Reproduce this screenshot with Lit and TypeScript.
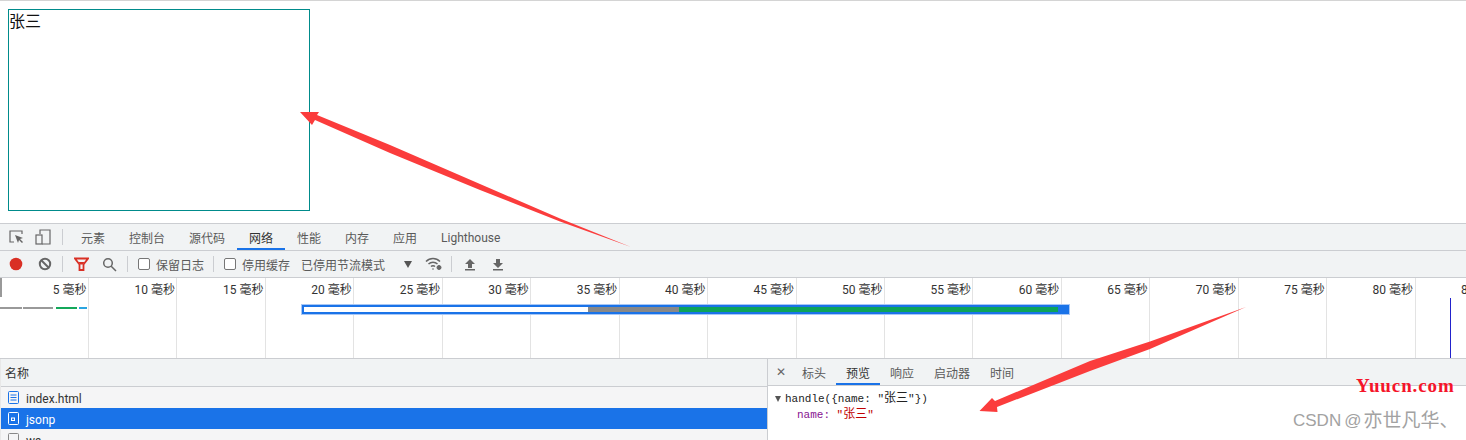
import { LitElement, html, css } from "lit";
import { customElement } from "lit/decorators.js";

const TABS = ["元素", "控制台", "源代码", "网络", "性能", "内存", "应用", "Lighthouse"];
const DETAIL = ["标头", "预览", "响应", "启动器", "时间"];
const TICKS = Array.from({ length: 17 }, (_, i) => (i + 1) * 5);

@customElement("app-root")
export class AppRoot extends LitElement {
  static styles = css`
    :host { display: block; width: 1466px; height: 440px; overflow: hidden; position: relative; background: #fff;
      font-family: Roboto, "Noto Sans CJK SC", sans-serif; font-size: 12px; color: #333; }
    .page { border-top: 1px solid #d4d4d4; padding: 8px 8px 0; box-sizing: border-box; height: 223px; }
    .box { width: 302px; height: 202px; box-sizing: border-box; border: 1px solid #008b8b; font-size: 16px; line-height: 20px; color: #111; font-family: "Noto Sans CJK SC", sans-serif; }
    .devtools { height: 217px; display: flex; flex-direction: column; }
    .bar { background: #f1f3f4; display: flex; align-items: center; box-sizing: border-box; flex: none; }
    .main { height: 28px; border-top: 1px solid #cbcdd1; border-bottom: 1px solid #cbcdd1; padding-left: 9px; }
    .tools { height: 27px; border-bottom: 1px solid #cbcdd1; padding-left: 9px; color: #555; }
    .tab { height: 26px; display: flex; align-items: center; padding: 2px 12px 0; color: #5a5a5a; box-sizing: border-box; border-bottom: 2px solid transparent; }
    .tab.on { color: #333; border-bottom-color: #1a73e8; }
    .tab.lat { padding-top: 4px; }
    .tabs { display: flex; margin-left: 6px; }
    .sep { width: 1px; height: 16px; background: #cbcdd1; flex: none; }
    .ic { display: block; flex: none; }
    .check { display: flex; align-items: center; gap: 6px; color: #5a5a5a; }
    .box-ic { width: 12px; height: 12px; border: 1px solid #767676; border-radius: 2px; box-sizing: border-box; background: #fff; }
    .over { position: relative; flex: none; display: flex; background: #fff; border-bottom: 1px solid #cbcdd1; height: 80px; padding-left: .6px; }
    .tick { width: 88.45px; flex: none; box-sizing: border-box; border-right: 1px solid #e3e3e3; text-align: right; padding: 4px 1.5px 0 0; line-height: 17px; color: #333; white-space: nowrap; }
    .handle { position: absolute; left: 0; top: 0; width: 2px; height: 19px; background: #999; }
    .seg { position: absolute; height: 2px; top: 29px; }
    .sel { position: absolute; left: 301px; top: 26px; width: 769px; height: 11px; box-sizing: border-box; border: 1px solid #a8c7f5; background: #fff; }
    .sel div { display: flex; height: 100%; box-sizing: border-box; border: 2px solid #1a73e8; }
    .sel i { display: block; height: 100%; }
    .vline { position: absolute; left: 1450px; top: 20px; width: 1px; height: 60px; background: #2222cc; }
    .split { flex: 1; display: flex; min-height: 0; }
    .left { width: 768px; flex: none; box-sizing: border-box; border-right: 1px solid #cbcdd1; border-left: 1px solid #e8e8e8; background: #fff; overflow: hidden; }
    .right { flex: 1; background: #fff; }
    .head { height: 28px; border-bottom: 1px solid #cbcdd1; padding-left: 4px; color: #333; }
    .row { height: 21px; display: flex; align-items: center; padding-left: 7px; gap: 7px; background: #f5f5f6; color: #333; }
    .row span { position: relative; top: 1px; }
    .row.sel2 { background: #1a73e8; color: #fff; }
    .dtabs { height: 27px; border-bottom: 1px solid #cbcdd1; padding-left: 5px; }
    .dtab { padding: 2px 10px 0; height: 26px; display: flex; align-items: center; color: #5a5a5a; box-sizing: border-box; border-bottom: 2px solid transparent; }
    .dtab.on { color: #333; border-bottom-color: #1a73e8; }
    .x { color: #666; font-size: 12px; width: 16px; margin-right: 3px; text-align: center; }
    .tree { font-family: "Liberation Mono", "Noto Sans CJK SC", monospace; font-size: 11px; line-height: 16px; padding: 5px 0 0 7px; color: #222; }
    .tree > div { white-space: pre; display: flex; align-items: center; }
    .cjk { font-size: 12px; }
    .tri { width: 0; height: 0; border-left: 3.5px solid transparent; border-right: 3.5px solid transparent; border-top: 6px solid #555; margin-right: 4px; }
    .k { color: #881391; margin-left: 22px; }
    .v { color: #c00000; }
    .art { position: absolute; left: 0; top: 0; pointer-events: none; }
    .mark-a { position: absolute; left: 1356px; top: 376px; font-family: "Liberation Serif", serif; font-weight: 700; font-size: 19px; color: #f5142a; letter-spacing: .9px; line-height: 20px; }
    .mark-b { position: absolute; left: 1293px; top: 411px; font-family: "Liberation Sans", "Noto Sans CJK SC", sans-serif; font-size: 17px; color: #a2a2a2; line-height: 20px; white-space: nowrap; display: flex; align-items: center; }
    .mark-b span { font-size: 19px; margin-left: 2px; }
    .mark-b b { font-weight: 400; margin-left: 3px; }
  `;

  render() {
    return html`
      <div class="page"><div class="box">张三</div></div>
      <div class="devtools">
        <div class="bar main">
          <svg class="ic" width="16" height="16" viewBox="0 0 16 16" fill="none" stroke="#666"><path d="M5 13H1V2h12v3" stroke-width="1.2"/><path d="M6 6l8 3-3 1 3 3-1 1-3-3-1 3z" fill="#666" stroke="none"/></svg>
          <svg class="ic" style="margin-left:10px" width="16" height="16" viewBox="0 0 16 16" fill="none" stroke="#666" stroke-width="1.2"><path d="M5 5V1h10v14H7"/><rect x="1" y="6" width="6" height="9"/></svg>
          <span class="sep" style="margin-left:11px"></span>
          <div class="tabs">
            ${TABS.map((t) => html`<div class="tab ${t === "网络" ? "on" : ""} ${t === "Lighthouse" ? "lat" : ""}">${t}</div>`)}
          </div>
        </div>
        <div class="bar tools">
          <svg class="ic" width="14" height="14" viewBox="0 0 14 14"><circle cx="7" cy="7" r="6.3" fill="#d93025"/></svg>
          <svg class="ic" style="margin-left:15px" width="14" height="14" viewBox="0 0 14 14" fill="none" stroke="#666" stroke-width="2"><circle cx="7" cy="7" r="5.2"/><path d="M3.5 3.5l7 7"/></svg>
          <span class="sep" style="margin-left:10px"></span>
          <svg class="ic" style="margin-left:11px" width="15" height="14" viewBox="0 0 15 14"><path d="M1 1.5h13L9.5 7.5V13h-4V7.5z" fill="none" stroke="#d93025" stroke-width="1.8"/><path d="M4.5 5h6L8.7 7.5H6.3z" fill="#d93025"/></svg>
          <svg class="ic" style="margin-left:13px" width="15" height="15" viewBox="0 0 15 15" fill="none" stroke="#666" stroke-width="1.5"><circle cx="6" cy="6" r="4.3"/><path d="M9.2 9.2l4.8 4.8"/></svg>
          <span class="sep" style="margin-left:10px"></span>
          <div class="check" style="margin-left:10px"><span class="box-ic"></span>保留日志</div>
          <span class="sep" style="margin-left:9px"></span>
          <div class="check" style="margin-left:10px"><span class="box-ic"></span>停用缓存</div>
          <span style="margin-left:11px;color:#5a5a5a">已停用节流模式</span>
          <svg class="ic" style="margin-left:19px" width="9" height="7" viewBox="0 0 9 7"><path d="M0 0h8L4 7z" fill="#555"/></svg>
          <svg class="ic" style="margin-left:12px" width="18" height="14" viewBox="0 0 18 14" fill="none" stroke="#666" stroke-width="1.5"><path d="M1 4.5C5 .5 11 .5 15 4.5M3.5 7C6 4.7 10 4.7 12.5 7M6 9.5c1-.9 3-.9 4 0"/><circle cx="14" cy="10.5" r="2" fill="#666" stroke-width="1"/><circle cx="8" cy="12" r=".8" fill="#666" stroke="none"/></svg>
          <span class="sep" style="margin-left:8px"></span>
          <svg class="ic" style="margin-left:12px" width="12" height="13" viewBox="0 0 12 13" fill="#666"><path d="M6 1l5 5H8v4H4V6H1z"/><rect x="1" y="11" width="10" height="1.5"/></svg>
          <svg class="ic" style="margin-left:16px" width="12" height="13" viewBox="0 0 12 13" fill="#666"><path d="M4 1h4v4h3l-5 5-5-5h3z"/><rect x="1" y="11" width="10" height="1.5"/></svg>
        </div>
        <div class="over">
          ${TICKS.map((t) => html`<div class="tick">${t} 毫秒</div>`)}
          <span class="handle"></span>
          <span class="seg" style="left:0;width:22px;background:#999"></span>
          <span class="seg" style="left:23px;width:30px;background:#999"></span>
          <span class="seg" style="left:56px;width:21px;background:#14a85a"></span>
          <span class="seg" style="left:79px;width:8px;background:#2aa5e0"></span>
          <div class="sel"><div>
            <i style="width:284px;background:#fff"></i>
            <i style="width:91px;background:#888"></i>
            <i style="width:379px;background:#0ca35a"></i>
            <i style="flex:1;background:#1a73e8"></i>
          </div></div>
          <span class="vline"></span>
        </div>
        <div class="split">
          <div class="left">
            <div class="bar head">名称</div>
            <div class="row">
              <svg class="ic" width="11" height="13" viewBox="0 0 11 13" fill="none" stroke="#1a73e8"><rect x=".5" y=".5" width="10" height="12" rx="1"/><path d="M2.5 4h6M2.5 6.5h6M2.5 9h6"/></svg>
              <span>index.html</span>
            </div>
            <div class="row sel2">
              <svg class="ic" width="11" height="13" viewBox="0 0 11 13" fill="none" stroke="#fff"><rect x=".5" y=".5" width="10" height="12" rx="1"/><rect x="3.5" y="6" width="3" height="2.5"/></svg>
              <span>jsonp</span>
            </div>
            <div class="row">
              <svg class="ic" width="11" height="13" viewBox="0 0 11 13" fill="none" stroke="#888"><rect x=".5" y=".5" width="10" height="12" rx="1"/></svg>
              <span>ws</span>
            </div>
          </div>
          <div class="right">
            <div class="bar dtabs">
              <span class="x">✕</span>
              ${DETAIL.map((t) => html`<div class="dtab ${t === "预览" ? "on" : ""}">${t}</div>`)}
            </div>
            <div class="tree">
              <div><span class="tri"></span><span>handle({name: "</span><span class="cjk">张三</span><span>"})</span></div>
              <div><span class="k">name: </span><span class="v">"<span class="cjk">张三</span>"</span></div>
            </div>
          </div>
        </div>
      </div>
      <svg class="art" width="1466" height="440" viewBox="0 0 1466 440">
        <path d="M631 247L560 218.5 480 184 390 145 317 115 319 112 300 112 312 125 315 120 390 153 480 190 560 221.5z" fill="#fb3c3c"/>
        <path d="M1246 307L1150 341.5 1090 361 995 401 992 398 979.5 411 997.5 412 997 407 1090 371 1150 349z" fill="#fb3c3c"/>
      </svg>
      <div class="mark-a">Yuucn.com</div>
      <div class="mark-b">CSDN<b>@</b><span>亦世凡华、</span></div>
    `;
  }
}
